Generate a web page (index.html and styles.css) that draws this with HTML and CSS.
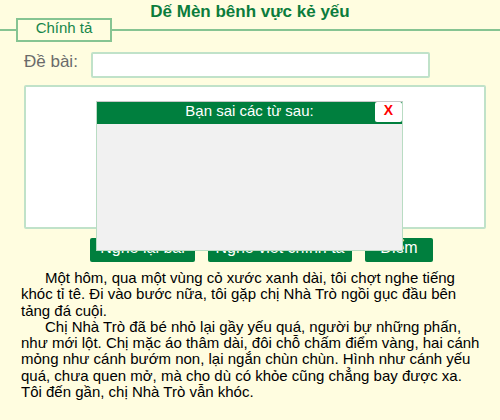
FILE: index.html
```html
<!DOCTYPE html>
<html lang="vi">
<head>
<meta charset="utf-8">
<title>Dế Mèn bênh vực kẻ yếu</title>
<link rel="stylesheet" href="styles.css">
</head>
<body>
<div class="page">
  <h1 class="title">Dế Mèn bênh vực kẻ yếu</h1>
  <div class="tabbar">
    <span class="tabline tabline-short"></span>
    <span class="tab">Chính tả</span>
    <span class="tabline tabline-long"></span>
  </div>
  <div class="task">
    <label class="task-label" for="de">Đề bài:</label>
    <input class="task-input" id="de" type="text">
  </div>
  <div class="writebox"></div>
  <div class="buttons">
    <div class="btn btn-1" role="button">Nghe lại bài</div>
    <div class="btn btn-2" role="button">Nghe viết chính tả</div>
    <div class="btn btn-3" role="button">Điểm</div>
  </div>
  <div class="story">
    <p>Một hôm, qua một vùng cỏ xước xanh dài, tôi chợt nghe tiếng khóc tỉ tê. Đi vào bước nữa, tôi gặp chị Nhà Trò ngồi gục đầu bên tảng đá cuội.</p>
    <p>Chị Nhà Trò đã bé nhỏ lại gầy yếu quá, người bự những phấn, như mới lột. Chị mặc áo thâm dài, đôi chỗ chấm điểm vàng, hai cánh mỏng như cánh bướm non, lại ngắn chùn chùn. Hình như cánh yếu quá, chưa quen mở, mà cho dù có khỏe cũng chẳng bay được xa. Tôi đến gần, chị Nhà Trò vẫn khóc.</p>
  </div>

  <div class="modal">
    <div class="modal-head">
      <span class="modal-title">Bạn sai các từ sau:</span>
      <span class="modal-close">X</span>
    </div>
    <div class="modal-body"></div>
  </div>
</div>
</body>
</html>
```

FILE: styles.css
```css
html, body {
  margin: 0;
  padding: 0;
  background: #fffde0;
  font-family: "Liberation Sans", Arial, sans-serif;
}

.page {
  position: relative;
  width: 500px;
  height: 420px;
  overflow: hidden;
}

.title {
  margin: 0;
  padding-top: 6px;
  height: 12px;
  line-height: 12px;
  font-size: 17px;
  font-weight: bold;
  color: #0b7c3c;
  text-align: center;
}

.tabbar {
  display: flex;
  align-items: center;
  height: 24px;
}

.tabline {
  height: 2px;
  background: #86c492;
}

.tabline-short {
  width: 16px;
}

.tabline-long {
  flex: 1;
}

.tab {
  box-sizing: border-box;
  width: 96px;
  height: 24px;
  border: 2px solid #86c492;
  text-align: center;
  line-height: 16px;
  font-size: 15px;
  color: #17864a;
  background: #fffde0;
}

.task {
  display: flex;
  align-items: flex-start;
  margin-top: 10px;
  padding-left: 24px;
  height: 26px;
}

.task-label {
  width: 67px;
  line-height: 20px;
  font-size: 17px;
  color: #6a6a6a;
}

.task-input {
  box-sizing: border-box;
  width: 339px;
  height: 26px;
  margin: 0;
  border: 2px solid #c0e2c9;
  border-radius: 2px;
  background: #fff;
  outline: none;
}

.writebox {
  box-sizing: border-box;
  margin: 7px 0 0 24px;
  width: 462px;
  height: 144px;
  border: 2px solid #c0e2c9;
  border-radius: 2px;
  background: #fff;
}

.buttons {
  display: flex;
  gap: 13px;
  margin: 9px 0 0 90px;
}

.btn {
  box-sizing: border-box;
  height: 24px;
  padding-top: 1px;
  border-radius: 2px;
  background: #007f3e;
  color: #fff;
  font-size: 16px;
  line-height: 17px;
  text-align: center;
  white-space: nowrap;
}

.btn-1 { width: 105px; }
.btn-2 { width: 144px; }
.btn-3 { width: 68px; }

.story {
  margin: 8px 14px 0 21px;
  font-size: 15px;
  line-height: 16.3px;
  color: #000;
}

.story p {
  margin: 0;
  text-indent: 24px;
}

.modal {
  position: absolute;
  left: 96px;
  top: 101px;
  width: 307px;
  height: 150px;
  box-sizing: border-box;
  border: 1px solid #b9dcc3;
  border-top-color: #c8c8c8;
  background: #f1f1f1;
  display: flex;
  flex-direction: column;
}

.modal-head {
  display: flex;
  align-items: flex-start;
  justify-content: center;
  position: relative;
  height: 22px;
  background: #007f3e;
}

.modal-title {
  color: #fff;
  font-size: 15px;
  line-height: 17px;
}

.modal-close {
  position: absolute;
  right: 0;
  top: 0;
  width: 27px;
  height: 20px;
  background: #fff;
  border-radius: 2px;
  color: #f00;
  font-weight: bold;
  font-size: 14px;
  line-height: 16px;
  text-align: center;
}

.modal-body {
  flex: 1;
}
```
